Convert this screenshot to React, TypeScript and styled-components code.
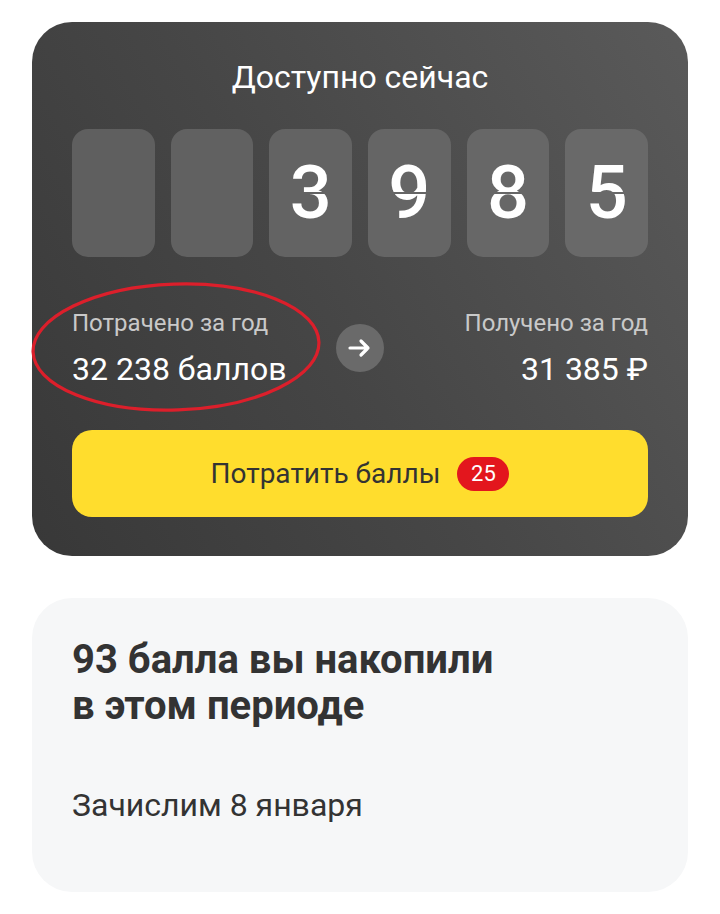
import React from "react";
import styled, { createGlobalStyle } from "styled-components";

const Global = createGlobalStyle`
  html, body { margin: 0; padding: 0; background: #ffffff; }
  body { font-family: Roboto, "Noto Sans", Arial, sans-serif; -webkit-font-smoothing: antialiased; }
  * { box-sizing: border-box; }
`;

const Page = styled.div`
  display: flex;
  flex-direction: column;
  gap: 42px;
  padding: 22px 32px 22px;
`;

const DarkCard = styled.section`
  position: relative;
  display: flex;
  flex-direction: column;
  padding: 36px 40px 39px;
  border-radius: 40px;
  background: linear-gradient(60deg, #383838 0%, #464646 45%, #5a5a5a 100%);
  color: #ffffff;
`;

const Title = styled.h2`
  margin: 0;
  text-align: center;
  font-size: 32px;
  line-height: 38px;
  font-weight: 400;
  color: #ffffff;
`;

const Digits = styled.div`
  margin-top: 33px;
  display: grid;
  grid-template-columns: repeat(6, 1fr);
  gap: 16px;
`;

const DigitBox = styled.div<{ $shade: string }>`
  position: relative;
  height: 128px;
  border-radius: 16px;
  background: ${(p) => p.$shade};
  display: flex;
  align-items: center;
  justify-content: center;
  font-size: 74px;
  font-weight: 500;
  color: #ffffff;
  line-height: 1;
  overflow: hidden;
`;

const Split = styled.span<{ $shade: string }>`
  position: absolute;
  left: 0;
  right: 0;
  top: 50%;
  height: 2px;
  margin-top: -1px;
  background: ${(p) => p.$shade};
`;

const Stats = styled.div`
  margin-top: 52px;
  display: flex;
  align-items: center;
  justify-content: space-between;
`;

const Stat = styled.div<{ $align: "left" | "right" }>`
  display: flex;
  flex-direction: column;
  gap: 14px;
  text-align: ${(p) => p.$align};
  width: 240px;
`;

const StatLabel = styled.div`
  font-size: 24px;
  line-height: 28px;
  color: #c9c9c9;
`;

const StatValue = styled.div`
  font-size: 32px;
  line-height: 36px;
  color: #ffffff;
`;

const ArrowCircle = styled.div`
  width: 48px;
  height: 48px;
  border-radius: 50%;
  background: #6a6a6a;
  display: flex;
  align-items: center;
  justify-content: center;
`;

const SpendButton = styled.button`
  margin-top: 43px;
  height: 87px;
  border: none;
  border-radius: 20px;
  background: #ffdd2d;
  display: flex;
  align-items: center;
  justify-content: center;
  gap: 17px;
  font-family: inherit;
  font-size: 28px;
  color: #333333;
  cursor: pointer;
`;

const Badge = styled.span`
  display: inline-flex;
  align-items: center;
  justify-content: center;
  min-width: 52px;
  height: 34px;
  padding: 0 10px;
  border-radius: 17px;
  background: #e3161d;
  color: #ffffff;
  font-size: 22px;
`;

const Annotation = styled.svg`
  position: absolute;
  left: -2px;
  top: 258px;
  width: 292px;
  height: 134px;
  overflow: visible;
  pointer-events: none;
`;

const LightCard = styled.section`
  display: flex;
  flex-direction: column;
  padding: 39px 40px 68px;
  border-radius: 40px;
  background: #f6f7f8;
  color: #333333;
`;

const Heading = styled.h3`
  margin: 0;
  font-size: 40px;
  line-height: 46px;
  font-weight: 700;
  color: #333333;
`;

const Note = styled.p`
  margin: 57px 0 0;
  font-size: 32px;
  line-height: 38px;
  color: #333333;
`;

const digits = ["", "", "3", "9", "8", "5"];
const shades = ["#5f5f5f", "#616161", "#636363", "#656565", "#676767", "#696969"];

export default function App() {
  return (
    <>
      <Global />
      <Page>
        <DarkCard>
          <Title>Доступно сейчас</Title>
          <Digits>
            {digits.map((d, i) => (
              <DigitBox key={i} $shade={shades[i]}>
                {d}
                {d && <Split $shade={shades[i]} />}
              </DigitBox>
            ))}
          </Digits>
          <Stats>
            <Stat $align="left">
              <StatLabel>Потрачено за год</StatLabel>
              <StatValue>32 238 баллов</StatValue>
            </Stat>
            <ArrowCircle>
              <svg width="24" height="24" viewBox="0 0 24 24" fill="none">
                <path d="M2 12h18M13 5l7 7-7 7" stroke="#ffffff" strokeWidth="3.2" strokeLinecap="round" strokeLinejoin="round" />
              </svg>
            </ArrowCircle>
            <Stat $align="right">
              <StatLabel>Получено за год</StatLabel>
              <StatValue>31 385 ₽</StatValue>
            </Stat>
          </Stats>
          <SpendButton>
            Потратить баллы
            <Badge>25</Badge>
          </SpendButton>
          <Annotation viewBox="0 0 292 134">
            <ellipse cx="146" cy="67" rx="143" ry="63" fill="none" stroke="#dc1f2b" strokeWidth="3.2" transform="rotate(-2 146 67)" />
          </Annotation>
        </DarkCard>
        <LightCard>
          <Heading>
            93 балла вы накопили
            <br />
            в этом периоде
          </Heading>
          <Note>Зачислим 8 января</Note>
        </LightCard>
      </Page>
    </>
  );
}
